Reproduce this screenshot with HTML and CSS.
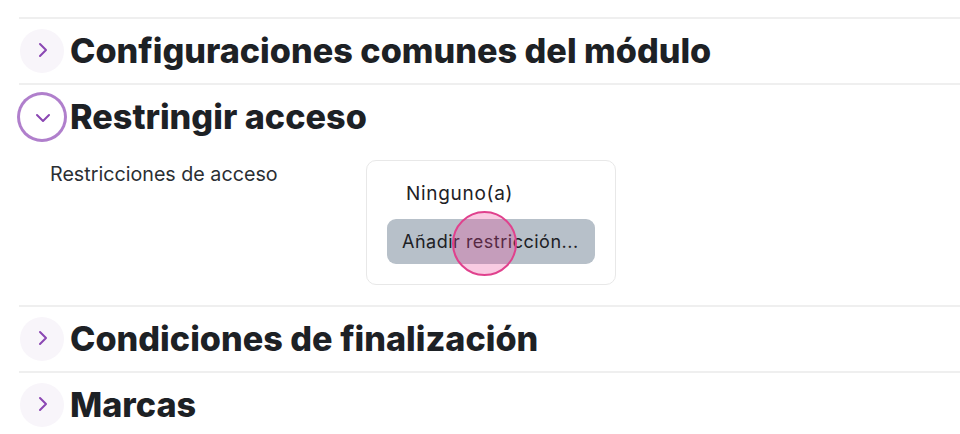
FILE: index.html
```html
<!DOCTYPE html>
<html lang="es">
<head>
<meta charset="utf-8">
<link rel="stylesheet" href="styles.css">
</head>
<body>
<div class="page">
  <section class="sec">
    <div class="sec-head">
      <span class="toggle">
        <svg class="chev-r" width="10" height="16" viewBox="0 0 10 16"><polyline points="2,2 8,8 2,14"/></svg>
      </span>
      <h3 class="sec-title">Configuraciones comunes del módulo</h3>
    </div>
  </section>
  <section class="sec">
    <div class="sec-head">
      <span class="toggle toggle-open">
        <svg class="chev-d" width="16" height="10" viewBox="0 0 16 10"><polyline points="2,2 8,8 14,2"/></svg>
      </span>
      <h3 class="sec-title">Restringir acceso</h3>
    </div>
    <div class="sec-body">
      <div class="field-label">Restricciones de acceso</div>
      <div class="avail-box">
        <div class="avail-none">Ninguno(a)</div>
        <div class="btn-wrap">
          <button class="btn-add">Añadir restricción...</button>
          <span class="tap"></span>
        </div>
      </div>
    </div>
  </section>
  <section class="sec">
    <div class="sec-head">
      <span class="toggle">
        <svg class="chev-r" width="10" height="16" viewBox="0 0 10 16"><polyline points="2,2 8,8 2,14"/></svg>
      </span>
      <h3 class="sec-title">Condiciones de finalización</h3>
    </div>
  </section>
  <section class="sec">
    <div class="sec-head">
      <span class="toggle">
        <svg class="chev-r" width="10" height="16" viewBox="0 0 10 16"><polyline points="2,2 8,8 2,14"/></svg>
      </span>
      <h3 class="sec-title">Marcas</h3>
    </div>
  </section>
</div>
</body>
</html>
```
FILE: styles.css
```css
html, body {
  margin: 0;
  padding: 0;
  overflow: hidden;
  background: #fff;
}
body {
  font-family: Inter, "Noto Sans", sans-serif;
  color: #1d2125;
}
.page {
  padding-top: 17px;
  padding-left: 19px;
}
.sec {
  border-top: 2px solid #efefef;
}
.sec-head {
  height: 64px;
  display: flex;
  align-items: center;
  gap: 6px;
  padding-left: 1px;
}
.toggle {
  width: 44px;
  height: 44px;
  border-radius: 50%;
  background: #f8f5fa;
  display: flex;
  align-items: center;
  justify-content: center;
  flex: none;
}
.toggle svg polyline {
  fill: none;
  stroke: #8b47b3;
  stroke-width: 2;
  stroke-linecap: round;
  stroke-linejoin: round;
}
.chev-r {
  margin-left: 2px;
  margin-top: -2px;
}
.chev-d {
  margin-left: 2px;
  margin-top: 1px;
}
.toggle-open {
  background: #fff;
  box-shadow: 0 0 0 3px #b07fcc;
}
.sec-title {
  margin: 0;
  font-size: 34.2px;
  font-weight: 800;
  line-height: 44px;
  color: #1d2125;
}
.sec-body {
  display: flex;
  align-items: flex-start;
  padding-left: 31px;
  padding-top: 11px;
  padding-bottom: 20px;
}
.field-label {
  width: 316px;
  flex: none;
  font-size: 19.7px;
  line-height: 28px;
  color: #2b2f33;
}
.avail-box {
  width: 228px;
  border: 1px solid #e8e8e8;
  border-radius: 10px;
  padding: 19px 0 20px 20px;
  box-sizing: content-box;
  height: 84px;
}
.avail-none {
  padding-left: 19px;
  font-size: 19px;
  letter-spacing: 0.7px;
  line-height: 28px;
  color: #1d2125;
}
.btn-wrap {
  position: relative;
  margin-top: 11px;
  width: 208px;
  height: 45px;
}
.btn-add {
  width: 208px;
  height: 45px;
  border: 0;
  border-radius: 9px;
  background: #b7c0c9;
  color: #1d2125;
  font-family: Inter, "Noto Sans", sans-serif;
  font-size: 18px;
  letter-spacing: 0.5px;
  line-height: 45px;
  padding: 0 0 0 15px;
  text-align: left;
  white-space: nowrap;
}
.tap {
  position: absolute;
  left: 65px;
  top: -8px;
  width: 61px;
  height: 61px;
  border: 2px solid #e0418d;
  border-radius: 50%;
  background: rgba(232, 70, 150, 0.28);
  pointer-events: none;
}
```
